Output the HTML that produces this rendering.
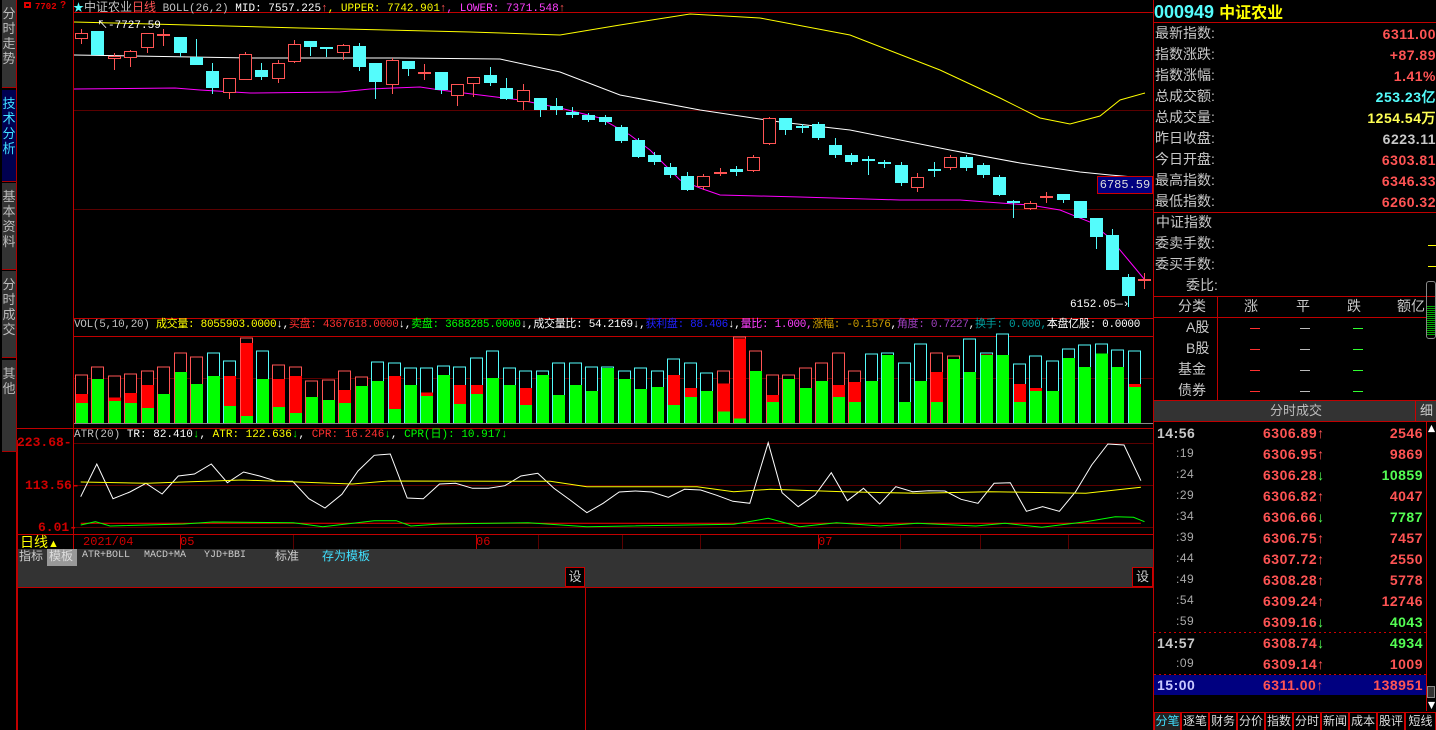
<!DOCTYPE html>
<html><head><meta charset="utf-8">
<style>
*{margin:0;padding:0;box-sizing:border-box}
html{width:1436px;height:730px;overflow:hidden}
body{width:1436px;height:730px;background:#000;position:relative;overflow:hidden;font-family:"Liberation Sans","Noto Sans CJK SC",sans-serif;color:#c0c0c0}
.a{position:absolute;white-space:nowrap;line-height:1}
.m{font-family:"Liberation Mono","Noto Sans CJK SC",monospace}
.tab{position:absolute;left:2px;width:15px;background:#333;color:#bbb;font-size:13px;line-height:15px;text-align:center;padding-top:6px;border-right:1px solid #a00;border-bottom:1px solid #a00}
.rl{position:absolute;left:1155px;font-size:14px;color:#c8c8c8;line-height:1;white-space:nowrap}
.rv{position:absolute;right:0;font-size:14px;font-weight:bold;line-height:1;font-family:"Liberation Sans",sans-serif;letter-spacing:0.5px;white-space:nowrap}
.tr{position:absolute;font-size:14px;font-weight:bold;line-height:1;letter-spacing:0.5px;white-space:nowrap}
.bt{position:absolute;top:712px;height:18px;font-size:12px;color:#ddd;border:1px solid #c00;border-bottom:none;background:#000;text-align:center;line-height:17px;white-space:nowrap;overflow:hidden}
</style></head><body>
<svg id="g" width="1436" height="730" style="position:absolute;left:0;top:0" xmlns="http://www.w3.org/2000/svg" shape-rendering="crispEdges"></svg>

<div class="tab" style="top:0;height:88px">分<br>时<br>走<br>势</div>
<div class="tab" style="top:90px;height:92px;background:#000050;color:#40e0ff">技<br>术<br>分<br>析</div>
<div class="tab" style="top:183px;height:87px">基<br>本<br>资<br>料</div>
<div class="tab" style="top:271px;height:87px">分<br>时<br>成<br>交</div>
<div class="tab" style="top:360px;height:92px">其<br>他</div>
<div class="a m" style="left:35px;top:3px;font-size:9px;color:#e00000;font-weight:bold">7702</div>
<div class="a" style="left:24px;top:2px;width:7px;height:6px;border:2px solid #e00000"></div>
<div class="a" style="left:60px;top:1px;font-size:10px;color:#e00000;font-weight:bold">?</div>

<div class="a m" style="left:73px;top:1px;font-size:11px"><span style="color:#54fcfc">★</span><span style="color:#c0c0c0;font-family:'Liberation Sans','Noto Sans CJK SC',sans-serif;font-size:12px">中证农业</span><span style="color:#ff5454;font-family:'Liberation Sans','Noto Sans CJK SC',sans-serif;font-size:12px">日线</span> <span style="color:#c0c0c0">BOLL(26,2)</span> <span style="color:#fff">MID: 7557.225</span><span style="color:#ff5454">↑</span><span style="color:#ffff00">, UPPER: 7742.901</span><span style="color:#ff5454">↑</span><span style="color:#ff40ff">, LOWER: 7371.548</span><span style="color:#ff5454">↑</span></div>
<div class="a m" style="left:97px;top:21px;font-size:11px;color:#fff">↖-7727.59</div>
<div class="a m" style="left:1070px;top:300px;font-size:11px;color:#fff">6152.05—›</div>
<div class="a m" style="left:1097px;top:176px;width:56px;height:18px;background:#000080;border:1px solid #c00;color:#ddd;font-size:12px;text-align:center;line-height:16px">6785.59</div>

<div class="a m" style="left:74px;top:320px;font-size:11px;letter-spacing:-0.3px"><span style="color:#c0c0c0">VOL(5,10,20)</span> <span style="color:#ffff00">成交量: 8055903.0000</span><span style="color:#fff">↓,</span><span style="color:#ff3030">买盘: 4367618.0000</span><span style="color:#fff">↓,</span><span style="color:#00ff00">卖盘: 3688285.0000</span><span style="color:#fff">↓,成交量比: 54.2169</span><span style="color:#fff">↓,</span><span style="color:#2020ff">获利盘: 88.406</span><span style="color:#fff">↓,</span><span style="color:#ff40ff">量比: 1.000,</span><span style="color:#d0a000">涨幅: -0.1576</span><span style="color:#fff">,</span><span style="color:#a040c0">角度: 0.7227</span><span style="color:#fff">,</span><span style="color:#00a0a0">换手: 0.000,</span><span style="color:#fff">本盘亿股: 0.0000</span></div>
<div class="a m" style="left:74px;top:430px;font-size:11px"><span style="color:#c0c0c0">ATR(20)</span> <span style="color:#fff">TR: 82.410</span><span style="color:#00ff00">↓</span><span style="color:#fff">, </span><span style="color:#ffff00">ATR: 122.636</span><span style="color:#00ff00">↓</span><span style="color:#fff">, </span><span style="color:#ff3030">CPR: 16.246</span><span style="color:#00ff00">↓</span><span style="color:#fff">, </span><span style="color:#00ff00">CPR(日): 10.917↓</span></div>
<div class="a m" style="left:17px;top:436px;font-size:13px;color:#d00000;font-weight:bold">223.68-</div>
<div class="a m" style="left:25px;top:479px;font-size:13px;color:#d00000;font-weight:bold">113.56-</div>
<div class="a m" style="left:38px;top:521px;font-size:13px;color:#d00000;font-weight:bold">6.01-</div>

<div class="a" style="left:20px;top:535px;font-size:14px;color:#ffff00">日线<span style="font-size:11px">▲</span></div>
<div class="a m" style="left:83px;top:536px;font-size:12px;color:#d00000">2021/04</div>
<div class="a m" style="left:180px;top:536px;font-size:12px;color:#d00000">05</div>
<div class="a m" style="left:476px;top:536px;font-size:12px;color:#d00000">06</div>
<div class="a m" style="left:818px;top:536px;font-size:12px;color:#d00000">07</div>

<div class="a" style="left:18px;top:549px;width:1135px;height:17px;background:#333"></div>
<div class="a" style="left:19px;top:550px;font-size:12px;color:#ccc">指标</div>
<div class="a" style="left:47px;top:549px;width:30px;height:17px;background:#999;color:#ddd;font-size:12px;padding:1px 2px">模板</div>
<div class="a m" style="left:82px;top:551px;font-size:10px;color:#ccc">ATR+BOLL</div>
<div class="a m" style="left:144px;top:551px;font-size:10px;color:#ccc">MACD+MA</div>
<div class="a m" style="left:204px;top:551px;font-size:10px;color:#ccc">YJD+BBI</div>
<div class="a" style="left:275px;top:550px;font-size:12px;color:#ccc">标准</div>
<div class="a" style="left:322px;top:550px;font-size:12px;color:#40e0ff">存为模板</div>
<div class="a" style="left:18px;top:566px;width:1135px;height:21px;background:#333"></div>
<div class="a" style="left:565px;top:567px;width:20px;height:20px;background:#000;border:1px solid #c00;font-size:13px;color:#ccc;text-align:center;line-height:18px">设</div>
<div class="a" style="left:1132px;top:567px;width:21px;height:20px;background:#000;border:1px solid #c00;font-size:13px;color:#ccc;text-align:center;line-height:18px">设</div>

<div class="a" style="left:1154px;top:3px;font-size:18px;font-weight:bold;color:#54fcfc">000949 <span style="color:#ffff00;font-size:16px">中证农业</span></div>
<div class="rl" style="top:26px">最新指数:</div><div class="rv" style="top:27px;color:#ff5454">6311.00</div>
<div class="rl" style="top:47px">指数涨跌:</div><div class="rv" style="top:48px;color:#ff5454">+87.89</div>
<div class="rl" style="top:68px">指数涨幅:</div><div class="rv" style="top:69px;color:#ff5454">1.41%</div>
<div class="rl" style="top:89px">总成交额:</div><div class="rv" style="top:90px;color:#54fcfc">253.23亿</div>
<div class="rl" style="top:110px">总成交量:</div><div class="rv" style="top:111px;color:#ffff54">1254.54万</div>
<div class="rl" style="top:131px">昨日收盘:</div><div class="rv" style="top:132px;color:#c8c8c8">6223.11</div>
<div class="rl" style="top:152px">今日开盘:</div><div class="rv" style="top:153px;color:#ff5454">6303.81</div>
<div class="rl" style="top:173px">最高指数:</div><div class="rv" style="top:174px;color:#ff5454">6346.33</div>
<div class="rl" style="top:194px">最低指数:</div><div class="rv" style="top:195px;color:#ff5454">6260.32</div>
<div class="rl" style="top:215px;left:1156px">中证指数</div>
<div class="rl" style="top:236px">委卖手数:</div>
<div class="rl" style="top:257px">委买手数:</div>
<div class="rl" style="top:278px;left:1186px">委比:</div>
<div class="a" style="left:1428px;top:245px;width:8px;height:1px;background:#ff0"></div>
<div class="a" style="left:1428px;top:266px;width:8px;height:1px;background:#ff0"></div>
<div class="a" style="left:1426px;top:281px;width:10px;height:58px;border:1px solid #888;border-radius:3px;background:repeating-linear-gradient(#0a0 0 1px,#000 1px 2px) 0 24px/100% 30px no-repeat"></div>
<div class="rl" style="top:299px;left:1178px">分类</div>
<div class="rl" style="top:299px;left:1244px">涨</div>
<div class="rl" style="top:299px;left:1296px">平</div>
<div class="rl" style="top:299px;left:1347px">跌</div>
<div class="rl" style="top:299px;left:1397px">额亿</div>
<div class="rl" style="top:320px;left:1186px">A股</div>
<div class="rl" style="top:341px;left:1186px">B股</div>
<div class="rl" style="top:362px;left:1178px">基金</div>
<div class="rl" style="top:383px;left:1178px">债券</div>
<div class="a" style="left:1154px;top:401px;width:282px;height:20px;background:#333"></div>
<div class="a" style="left:1270px;top:404px;font-size:13px;color:#bbb">分时成交</div>
<div class="a" style="left:1415px;top:401px;width:21px;height:20px;border-left:1px solid #c00;font-size:13px;color:#ccc;padding:3px 0 0 4px">细</div>
<div class="a" style="left:1154px;top:675px;width:272px;height:20px;background:#000080"></div>
<div id="trades"></div>
<div class="a" style="left:1426px;top:421px;width:10px;height:290px;border-left:1px solid #c00"></div>
<div class="a" style="left:1427px;top:424px;width:9px;height:9px;background:#fff;clip-path:polygon(50% 10%,90% 90%,10% 90%)"></div>
<div class="a" style="left:1427px;top:686px;width:8px;height:12px;background:#333;border:1px solid #888"></div>
<div class="a" style="left:1427px;top:701px;width:9px;height:9px;background:#fff;clip-path:polygon(10% 10%,90% 10%,50% 90%)"></div>
<div class="bt" style="left:1154px;width:27px;color:#40e0ff;background:#222">分笔</div>
<div class="bt" style="left:1181px;width:28px">逐笔</div>
<div class="bt" style="left:1209px;width:28px">财务</div>
<div class="bt" style="left:1237px;width:28px">分价</div>
<div class="bt" style="left:1265px;width:28px">指数</div>
<div class="bt" style="left:1293px;width:28px">分时</div>
<div class="bt" style="left:1321px;width:28px">新闻</div>
<div class="bt" style="left:1349px;width:28px">成本</div>
<div class="bt" style="left:1377px;width:28px">股评</div>
<div class="bt" style="left:1405px;width:31px">短线</div>

<script>
var S=document.getElementById('g'),h='';
function L(x1,y1,x2,y2,c){h+='<line x1="'+x1+'" y1="'+y1+'" x2="'+x2+'" y2="'+y2+'" stroke="'+c+'" stroke-width="1"/>';}
function R(x,y,w,hh,f,s){h+='<rect x="'+x+'" y="'+y+'" width="'+w+'" height="'+hh+'" fill="'+f+'"'+(s?' stroke="'+s+'"':'')+'/>';}
function P(pts,c,sx,sy,ox,oy){var s='';for(var i=0;i<pts.length;i+=2){s+=(ox+pts[i]/sx).toFixed(1)+','+(oy+pts[i+1]/sy).toFixed(1)+' ';}h+='<polyline points="'+s+'" fill="none" stroke="'+c+'" stroke-width="1" shape-rendering="auto"/>';}
var RED='#ff5454',CY='#54fcfc',BR='#c00000',DK='#5a0000';
L(16.5,0,16.5,730,BR);L(73.5,0,73.5,549,BR);L(1153.5,0,1153.5,730,BR);L(17.5,440,17.5,730,BR);
L(74,12.5,1153,12.5,BR);L(74,110.5,1153,110.5,DK);L(74,209.5,1153,209.5,DK);
L(74,318.5,1153,318.5,BR);L(74,336.5,1153,336.5,BR);L(74,378.5,1153,378.5,DK);
L(17,428.5,1153,428.5,BR);L(74,443.5,1153,443.5,DK);L(74,485.5,1153,485.5,DK);L(74,527.5,1153,527.5,DK);
L(17,534.5,1153,534.5,BR);L(17,549.5,1153,549.5,BR);L(17,566.5,1153,566.5,BR);L(17,587.5,1153,587.5,BR);L(585.5,566,585.5,730,BR);
[180,293,476,538,622,700,818,900,980,1068].forEach(function(x){L(x+.5,535,x+.5,549,x==180||x==476||x==818?BR:DK);});
L(1154,22.5,1436,22.5,BR);L(1154,212.5,1436,212.5,BR);L(1154,296.5,1436,296.5,BR);L(1154,317.5,1436,317.5,BR);L(1154,400.5,1436,400.5,BR);L(1154,421.5,1436,421.5,BR);
L(1217.5,296,1217.5,400,BR);
h+='<line x1="1154" y1="632.5" x2="1426" y2="632.5" stroke="#c00" stroke-dasharray="2,3"/><line x1="1154" y1="674.5" x2="1426" y2="674.5" stroke="#c00" stroke-dasharray="2,3"/>';
[328,349,370,391].forEach(function(y){L(1250,y+.5,1260,y+.5,'#ff3030');L(1300,y+.5,1310,y+.5,'#bbb');L(1353,y+.5,1363,y+.5,'#30ff30');});
P([74,22,300,28,470,32,560,35,620,25,690,14,760,18,850,35,940,70,1000,98,1040,118,1070,124,1100,116,1120,100,1145,93],'#ffff00',1,1,0,0);
P([74,55,250,58,400,58,500,59,560,72,620,95,700,110,780,122,850,130,950,150,1020,163,1080,172,1110,175,1145,178],'#ffffff',1,1,0,0);
P([74,89,175,88,200,90,250,93,340,92,370,89,420,87,440,90,480,95,520,100,560,108,600,118,630,135,650,150,665,165,680,180,700,188,720,195,800,197,900,200,960,200,1000,203,1030,205,1060,210,1090,222,1110,238,1130,262,1145,280],'#ff00ff',1,1,0,0);
var C=[[81,'r',33,38,29,44],[97,'c',31,55,31,55],[114,'r',56,58,53,70],[130,'r',51,57,50,67],[147,'r',33,47,33,53],[163,'x',34,34,29,46],[180,'c',37,53,37,57],[196,'c',57,65,39,65],[212,'c',71,88,63,94],[229,'r',78,92,78,99],[245,'r',54,79,52,80],[261,'c',70,77,63,80],[278,'r',63,78,60,83],[294,'r',44,61,40,63],[310,'c',41,47,41,56],[326,'c',47,49,47,57],[343,'r',45,52,44,60],[359,'c',46,67,43,71],[375,'c',63,82,63,99],[392,'r',60,84,58,94],[408,'c',61,69,61,76],[424,'x',72,72,64,80],[441,'c',72,90,72,94],[457,'r',84,95,84,106],[473,'r',77,83,77,97],[490,'c',75,83,67,86],[506,'c',88,99,78,100],[523,'r',90,101,84,110],[540,'c',98,110,98,117],[556,'c',106,110,98,115],[572,'c',112,115,107,118],[588,'c',115,120,113,122],
[605,'c',117,122,115,125],[621,'c',127,141,125,143],[638,'c',140,157,138,158],[654,'c',155,162,152,165],[670,'c',167,175,163,178],[687,'c',176,190,172,191],[703,'r',176,186,174,190],[720,'x',172,172,168,176],[736,'c',169,172,166,176],[753,'r',157,170,155,172],[769,'r',118,143,117,145],[785,'c',118,130,118,135],[802,'c',126,128,124,133],[818,'c',124,138,122,140],[835,'c',145,155,138,158],[851,'c',155,162,153,165],[868,'c',159,161,156,175],[884,'c',162,163,160,168],[901,'c',165,183,162,186],[917,'r',177,187,173,192],[934,'c',169,171,162,177],[950,'r',157,167,155,170],[966,'c',157,168,155,171],[983,'c',165,175,163,178],[999,'c',177,195,175,196],[1013,'c',201,203,200,218],[1030,'r',203,208,201,210],[1046,'x',196,196,192,203],[1063,'c',194,200,194,203],[1080,'c',201,218,201,218],[1096,'c',218,237,218,249],[1112,'c',235,270,229,270],[1128,'c',277,296,274,307],[1144,'x',279,279,273,289]];
C.forEach(function(c){var x=c[0],col=c[1]=='c'?CY:RED;L(x+.5,c[4],x+.5,c[5],col);
 if(c[1]=='c')R(x-6,c[2],13,Math.max(2,c[3]-c[2]),CY);
 else if(c[1]=='x')R(x-6,c[2],13,2,RED);
 else R(x-5.5,c[2]+.5,12,Math.max(1,c[3]-c[2]),'#000',RED);});
var V=[[193,252,279,'r'],[169,0,207,'r'],[196,262,273,'r'],[190,249,279,'r'],[181,225,294,'r'],[169,0,252,'r'],[127,0,186,'r'],[139,0,222,'r'],[127,0,198,'c'],[151,198,288,'c'],[82,99,318,'r'],[121,0,207,'c'],[163,207,291,'r'],[170,198,309,'r'],[211,0,261,'r'],[208,0,270,'r'],[181,240,279,'r'],[199,0,228,'r'],[154,0,213,'c'],[157,198,297,'c'],[172,0,225,'c'],[172,248,258,'c'],[166,0,195,'c'],[169,225,282,'c'],[142,225,252,'c'],[121,0,204,'c'],[172,0,225,'c'],[181,234,285,'c'],[181,0,195,'c'],[158,0,255,'c'],[158,0,225,'c'],[169,0,243,'c'],[169,0,174,'c'],[181,0,207,'c'],[172,0,237,'c'],[181,0,231,'c'],[145,195,285,'c'],[157,234,261,'c'],[187,0,243,'c'],[181,220,304,'r'],[79,85,326,'r'],[121,0,183,'r'],[193,255,276,'r'],[193,0,207,'r'],[172,0,234,'r'],[157,0,213,'r'],[127,225,261,'r'],[181,216,276,'r'],[130,0,213,'c'],[127,0,135,'c'],[157,0,276,'c'],[100,0,213,'c'],[127,186,276,'r'],[136,0,147,'r'],[85,0,186,'c'],[127,134,135,'c'],[70,0,135,'c'],[160,222,276,'c'],[136,234,243,'c'],[151,0,243,'c'],[115,0,144,'c'],[103,0,171,'c'],[100,0,131,'c'],[118,0,171,'c'],[121,222,231,'c']];
var base=423;V.forEach(function(v,i){var x=81+i*16.45-6;x=Math.round(x);var o=310+v[0]/3,g=310+v[2]/3;
 R(x+.5,o+.5,12,base-o,'#000',v[3]=='c'?CY:RED);
 if(v[1]){var r=310+v[1]/3;R(x+1,r,12,g-r,'#ff0000');}
 R(x+1,g,12,base-g+.5,'#00ff00');});
L(74,423.5,1153,423.5,'#888');
P([110,560,132,462,154,566,177,546,199,520,221,552,243,498,265,492,288,462,310,518,332,486,354,498,377,514,399,514,421,566,443,594,466,553,488,483,510,436,532,432,555,564,577,566,599,522,621,520,644,535,666,535,688,527,710,498,733,490,755,535,777,570,800,608,822,580,844,546,866,543,888,546,911,562,933,538,955,540,977,556,999,574,1022,580,1047,398,1066,548,1088,590,1111,555,1133,488,1155,572,1177,535,1199,582,1221,530,1244,545,1266,542,1288,543,1310,568,1333,580,1355,520,1377,518,1399,604,1421,590,1444,604,1466,545,1488,465,1510,402,1532,405,1555,512],'#ffffff',1.363,3,0,310);
P([110,516,200,520,330,510,480,522,530,513,750,514,800,530,950,530,1000,545,1050,538,1150,545,1250,550,1350,545,1480,550,1555,532],'#ffff00',1.363,3,0,310);
P([110,640,1555,640],'#ff0000',1.363,3,0,310);
P([110,645,130,635,150,648,250,642,290,636,400,638,440,650,510,632,540,632,560,648,600,642,720,638,800,650,1000,643,1047,625,1090,650,1140,638,1200,648,1250,640,1330,648,1370,640,1420,652,1480,635,1520,620,1545,622,1560,635],'#00ff00',1.363,3,0,310);
S.innerHTML=h;
var T=[['14:56','6306.89',1,'2546'],[':19','6306.95',1,'9869'],[':24','6306.28',0,'10859'],[':29','6306.82',1,'4047'],[':34','6306.66',0,'7787'],[':39','6306.75',1,'7457'],[':44','6307.72',1,'2550'],[':49','6308.28',1,'5778'],[':54','6309.24',1,'12746'],[':59','6309.16',0,'4043'],['14:57','6308.74',0,'4934'],[':09','6309.14',1,'1009'],['15:00','6311.00',1,'138951']];
var t='';T.forEach(function(r,i){var y=426+i*21;var big=r[0].length>3;var last=i==12;
 t+='<div class="tr" style="left:'+(big?1157:1176)+'px;top:'+y+'px;color:'+(last?'#c8c8ff':(big?'#c8c8c8':'#aaa'))+';font-weight:'+(big?'bold':'normal')+';font-size:'+(big?14:12)+'px">'+r[0]+'</div>';
 t+='<div class="tr" style="left:1263px;top:'+y+'px;color:#ff5454">'+r[1]+'<span style="color:'+(r[2]?'#ff5454':'#54ff54')+'">'+(r[2]?'↑':'↓')+'</span></div>';
 t+='<div class="tr" style="right:13px;top:'+y+'px;color:'+(r[2]?'#ff5454':'#54ff54')+'">'+r[3]+'</div>';});
document.getElementById('trades').innerHTML=t;
</script>
</body></html>
